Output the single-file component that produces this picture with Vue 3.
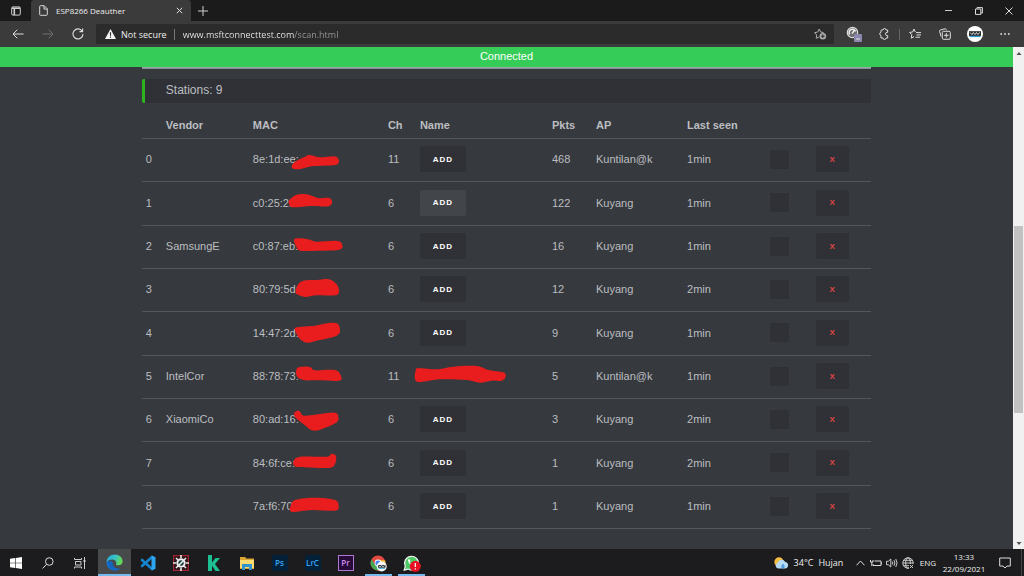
<script setup>
const stations = [
  { vendor: '', mac: '8e:1d:ee:', ch: 11, pkts: 468, ap: 'Kuntilan@k', seen: '1min', mark: [[128, 81], [138, 68], [168, 53], [183, 48], [213, 55], [256, 52], [268, 60], [269, 70], [258, 78], [190, 82], [155, 90], [133, 89]] },
  { vendor: '', mac: 'c0:25:2f', ch: 6, pkts: 122, ap: 'Kuyang', seen: '1min', hover: true, mark: [[121, 54], [143, 38], [173, 37], [208, 48], [241, 48], [249, 61], [238, 73], [188, 72], [133, 76], [121, 69]] },
  { vendor: 'SamsungE', mac: 'c0:87:eb:', ch: 6, pkts: 16, ap: 'Kuyang', seen: '1min', mark: [[135, 42], [148, 37], [178, 40], [203, 47], [266, 45], [280, 58], [271, 71], [213, 74], [155, 74], [142, 62]] },
  { vendor: '', mac: '80:79:5d:', ch: 6, pkts: 12, ap: 'Kuyang', seen: '2min', mark: [[140, 69], [146, 48], [163, 35], [203, 33], [240, 31], [263, 46], [270, 68], [258, 79], [203, 79], [168, 84], [144, 76]] },
  { vendor: '', mac: '14:47:2d:', ch: 6, pkts: 9, ap: 'Kuyang', seen: '1min', mark: [[138, 48], [158, 44], [198, 41], [238, 33], [264, 34], [273, 52], [263, 71], [203, 86], [173, 92], [153, 81], [141, 62]] },
  { vendor: 'IntelCor', mac: '88:78:73:', ch: 11, pkts: 5, ap: 'Kuntilan@k', seen: '1min', mark: [[144, 37], [163, 32], [185, 34], [198, 43], [258, 42], [276, 60], [270, 74], [203, 73], [163, 72], [143, 60]], nameMark: [[0, 40], [17, 37], [62, 40], [112, 32], [182, 30], [217, 42], [262, 49], [269, 62], [257, 74], [227, 74], [192, 80], [152, 72], [72, 70], [3, 77]] },
  { vendor: 'XiaomiCo', mac: '80:ad:16:', ch: 6, pkts: 3, ap: 'Kuyang', seen: '2min', mark: [[137, 40], [151, 36], [165, 50], [213, 45], [258, 41], [268, 54], [260, 72], [198, 95], [163, 75], [138, 54]] },
  { vendor: '', mac: '84:6f:ce:', ch: 6, pkts: 1, ap: 'Kuyang', seen: '2min', mark: [[133, 59], [153, 44], [233, 44], [247, 35], [261, 42], [258, 66], [238, 78], [153, 75], [137, 72]] },
  { vendor: '', mac: '7a:f6:70:', ch: 6, pkts: 1, ap: 'Kuyang', seen: '1min', mark: [[123, 67], [138, 42], [203, 35], [258, 42], [269, 60], [258, 74], [188, 72], [133, 78], [123, 72]] }
]

// Closed smooth curve through all points (Catmull-Rom to Bezier)
function blob(p) {
  const n = p.length
  let d = `M${p[0]}`
  for (let i = 0; i < n; i++) {
    const a = p[(i + n - 1) % n], b = p[i], c = p[(i + 1) % n], e = p[(i + 2) % n]
    d += `C${b[0] + (c[0] - a[0]) / 6},${b[1] + (c[1] - a[1]) / 6} ${c[0] - (e[0] - b[0]) / 6},${c[1] - (e[1] - b[1]) / 6} ${c}`
  }
  return d + 'Z'
}
</script>

<template>
  <div class="desktop">
    <header class="titlebar">
      <button class="tabmenu" aria-label="Tab actions">
        <svg width="10" height="10" viewBox="0 0 10 10" fill="none" stroke="#d0d0d0"><rect x=".7" y=".9" width="8.6" height="8.2" rx="1.2" /><path d="M1 2.2h8M3.3 3v6" stroke-width="1.6" /></svg>
      </button>
      <div class="tab">
        <svg width="9" height="11" viewBox="0 0 9 11" fill="none" stroke="#d8d8d8"><path d="M1.5.7h3.7L8.3 3.8v5.7a.8.8 0 0 1-.8.8h-6a.8.8 0 0 1-.8-.8v-8a.8.8 0 0 1 .8-.8ZM5 .8v3.3h3.3" /></svg>
        <span class="tabtitle">ESP8266 Deauther</span>
        <button aria-label="Close tab"><svg width="7" height="7" viewBox="0 0 7 7" stroke="#ddd"><path d="m.8.8 5.4 5.4M6.2.8.8 6.2" /></svg></button>
      </div>
      <button class="newtab" aria-label="New tab"><svg width="10" height="10" viewBox="0 0 10 10" stroke="#d0d0d0"><path d="M5 0v10M0 5h10" /></svg></button>
      <div class="winctl">
        <button aria-label="Minimize"><svg width="8" height="8" viewBox="0 0 8 8" stroke="#ccc"><path d="M0 3.5h7" /></svg></button>
        <button aria-label="Restore"><svg width="8" height="8" viewBox="0 0 8 8" fill="none" stroke="#ddd"><path d="M.5 2h5.300v5.400H.5ZM2 1.800V.6h5.400V6H6" /></svg></button>
        <button aria-label="Close"><svg width="8" height="8" viewBox="0 0 8 8" stroke="#ddd"><path d="m.5.5 7 7m0-7-7 7" /></svg></button>
      </div>
    </header>

    <nav class="toolbar">
      <button class="nav" aria-label="Back"><svg width="12" height="10" viewBox="0 0 12 10" fill="none" stroke="#ddd"><path d="M11.5 5H1M5.300.7 1 5l4.300 4.300" /></svg></button>
      <button class="nav" aria-label="Forward"><svg width="12" height="10" viewBox="0 0 12 10" fill="none" stroke="#707070"><path d="M.5 5H11M6.700.7 11 5 6.700 9.300" /></svg></button>
      <button class="nav" aria-label="Reload"><svg width="12" height="12" viewBox="0 0 12 12" fill="none" stroke="#ddd" stroke-width="1.1"><path d="M10.200 3.200A5 5 0 1 0 11 6M10.600.6v3H7.500" /></svg></button>
      <div class="address">
        <svg width="11" height="10" viewBox="0 0 11 10"><path d="M5.500 0 11 10H0Z" fill="#f4f4f4" /><path d="M5.500 3.300v3.400M5.500 7.600v1.200" stroke="#2b2b2b" stroke-width="1.1" /></svg>
        <span class="insecure">Not secure</span>
        <input type="text" aria-label="Address" value="www.msftconnecttest.com/scan.html">
        <button aria-label="Add to favorites"><svg width="13" height="12" viewBox="0 0 13 12" fill="none" stroke="#aaa"><path d="M5 9 2.200 10.300l.5-3.300L.6 4.600l3.100-.5L5.200 1l1.500 3.100 3 .4" /><circle cx="8.800" cy="8.200" r="3.300" fill="#aaa" stroke="none" /><path d="M8.800 6.400V10M7 8.200h3.600" stroke="#2b2b2b" /></svg></button>
      </div>
      <div class="extras">
        <button aria-label="Extension"><svg width="16" height="16" viewBox="0 0 16 16"><circle cx="6.500" cy="6.500" r="5.200" fill="#6d6d6d" stroke="#ddd" stroke-width="1.2" /><path d="M3.700 8.500a3.300 3.300 0 1 1 5.800-3M6 7.500l3-4" fill="none" stroke="#eee" stroke-width="1.5" /><rect x="8" y="8" width="8" height="8" rx="1" fill="#8c88ad" /><path d="M10 13h4" stroke="#ddd" /></svg></button>
        <button aria-label="Extensions"><svg width="12" height="12" viewBox="0 0 12 12" fill="none" stroke="#ddd"><path d="M3.500 2H5a1.500 1.500 0 0 1 3 0h1.700v2.300a1.700 1.700 0 1 0 0 3.300V10H8a1.500 1.500 0 0 1-3 0H3V7.500A1.700 1.700 0 0 1 3 4.200V2.500Q3 2 3.500 2Z" /></svg></button>
        <i class="divider"></i>
        <button aria-label="Favorites"><svg width="12" height="12" viewBox="0 0 12 12" fill="none" stroke="#ddd"><path d="M6.300 4 5 1 3.700 4l-3.100.4 2.200 2.300-.5 3.500L5 8.600M7 4.600h5M7.500 6.900H12M6.500 9.200H11" /></svg></button>
        <button aria-label="Collections"><svg width="12" height="12" viewBox="0 0 12 12" fill="none" stroke="#ddd"><rect x="3.300" y="3.300" width="8" height="8" rx="1.2" /><path d="M7.300 5v4.600M5 7.300h4.600M2 8.500.6 3.200A1 1 0 0 1 1.300 2L6 .8a1 1 0 0 1 1.200.7l.2.7" /></svg></button>
        <button class="avatar" aria-label="Profile"><svg width="16" height="16" viewBox="0 0 16 16"><circle cx="8" cy="8" r="8" fill="#fff" /><path d="M2 5.200h12v4.700H2Z" fill="#252a2d" /><path d="m3 6.500 2 2 1.300-2L8 8.500l1.500-2 1.300 2L13 6.400" fill="none" stroke="#fff" stroke-width=".8" /><path d="M2.500 10.500h11" stroke="#2c9bd0" stroke-width="1.2" /></svg></button>
        <button aria-label="Settings"><svg width="10" height="4" viewBox="0 0 10 4" fill="#ddd"><circle cx="1.200" cy="2" r=".9" /><circle cx="5" cy="2" r=".9" /><circle cx="8.800" cy="2" r=".9" /></svg></button>
      </div>
    </nav>

    <div class="viewport">
      <main class="page">
        <div class="status">Connected</div>
        <div class="container">
          <hr>
          <h2>Stations: 9</h2>
          <table>
            <colgroup><col class="c-id"><col class="c-vendor"><col class="c-mac"><col class="c-ch"><col class="c-name"><col class="c-pkts"><col class="c-ap"><col class="c-seen"><col class="c-pick"><col class="c-del"></colgroup>
            <thead>
              <tr><th></th><th>Vendor</th><th>MAC</th><th>Ch</th><th>Name</th><th>Pkts</th><th>AP</th><th>Last seen</th><th></th><th></th></tr>
            </thead>
            <tbody>
              <tr v-for="(s, i) in stations" :key="i">
                <td>{{ i }}</td>
                <td>{{ s.vendor }}</td>
                <td class="marked">{{ s.mac }}<svg class="mark" width="135" height="43" viewBox="0 0 405 129"><path :d="blob(s.mark)" /></svg></td>
                <td>{{ s.ch }}</td>
                <td class="marked">
                  <svg v-if="s.nameMark" class="mark" width="132" height="43" viewBox="0 0 396 129"><path :d="blob(s.nameMark)" /></svg>
                  <button v-else class="add" :class="{ hover: s.hover }">ADD</button>
                </td>
                <td>{{ s.pkts }}</td>
                <td>{{ s.ap }}</td>
                <td>{{ s.seen }}</td>
                <td><input type="checkbox" :aria-label="'Select station ' + i"></td>
                <td><button class="del" :aria-label="'Remove station ' + i">X</button></td>
              </tr>
            </tbody>
          </table>
        </div>
      </main>
      <div class="scrollbar" aria-hidden="true">
        <svg width="12" height="12" viewBox="0 0 12 12"><path d="M3.500 8 6 5l2.500 3Z" fill="#505050" /></svg>
        <i class="above"></i><i class="thumb"></i><i class="below"></i>
        <svg width="12" height="12" viewBox="0 0 12 12"><path d="M3.500 5 6 8l2.500-3Z" fill="#505050" /></svg>
      </div>
    </div>

    <footer class="taskbar">
      <div class="system">
        <button aria-label="Start"><svg width="12" height="12" viewBox="0 0 12 12" fill="#fff"><path d="M0 1.700 5.200 1v4.700H0ZM5.800.9 12 0v5.700H5.800ZM0 6.300h5.200V11L0 10.300ZM5.800 6.300H12V12l-6.200-.9Z" /></svg></button>
        <button aria-label="Search"><svg width="12" height="12" viewBox="0 0 12 12" fill="none" stroke="#ddd"><circle cx="7.300" cy="4.500" r="3.800" /><path d="M4.600 7.300.6 11.500" /></svg></button>
        <button aria-label="Task view"><svg width="12" height="12" viewBox="0 0 12 12" fill="none" stroke="#ccc"><path d="M.5 1v1.500h7V1M1.500 4.500h5.500v3.500H1.500ZM.5 11.500V10h7v1.500M10.500 0v12" /><path d="M9.500 4h2" stroke-width="2" /></svg></button>
      </div>
      <div class="apps">
        <button class="active" aria-label="Microsoft Edge">
          <svg width="17" height="17" viewBox="0 0 17 17"><defs><linearGradient id="eg" x1="0" y1="0" x2="1" y2=".3"><stop offset="0" stop-color="#2aa9e0" /><stop offset=".55" stop-color="#35c1c9" /><stop offset="1" stop-color="#62d957" /></linearGradient></defs><path d="M.5 8.500a8 8 0 0 0 13.900 5.400c-3 1.500-7.300.2-7.500-3.500C6.800 7.500 4.500 5.600.5 8.500Z" fill="#1474cf" /><path d="M.5 8.600C.6 3.700 4.300.4 8.800.4c4.600 0 7.800 3.300 7.800 6.800 0 2.600-1.800 4.100-4.200 4.100-1.400 0-2.800-.5-2.400-1.300C11 8.500 9.600 5.500 6.500 5.500 3.300 5.500.9 7 .5 8.600Z" fill="url(#eg)" /><path d="M2 7.300c2.600-1 5.200.5 4.900 3.100.2 3 3.600 4.800 7.500 3.500A8.400 8.400 0 0 1 9 16.700C4.600 16 2 12 2 7.300Z" fill="#125eb3" opacity=".65" /></svg>
        </button>
        <button aria-label="Visual Studio Code"><svg width="16" height="16" viewBox="0 0 16 16"><path d="M11.500 2.500 2 11M11.500 13.500 2 5" fill="none" stroke="#1684cf" stroke-width="2.600" stroke-linecap="round" /><path d="m11.500.3 4 1.900v11.600l-4 1.900Z" fill="#2ea4ee" /></svg></button>
        <button aria-label="Gear tool"><svg width="16" height="16" viewBox="0 0 16 16"><rect x=".6" y=".6" width="14.800" height="14.800" fill="#2b1519" stroke="#9e2434" stroke-width="1.200" /><path d="M8 0v3M8 13v3M0 8h3M13 8h3M3 3l2 2M13 3l-2 2M3 13l2-2M13 13l-2-2" stroke="#e8e8e8" stroke-width="1.600" /><circle cx="8" cy="8" r="4.700" fill="#f0f0f0" /><circle cx="8" cy="8" r="2.700" fill="#173e3a" /><path d="m5.500 10.500 5-5" stroke="#f4f4f4" stroke-width="1.500" /></svg></button>
        <button aria-label="K"><svg width="13" height="16" viewBox="0 0 13 16"><path d="M1 0h4v7.500L8.500 3H13L8 9l5 7H8.500L5 10.800V16H1Z" fill="#1cbf91" /></svg></button>
        <button aria-label="File Explorer"><svg width="16" height="14" viewBox="0 0 16 14"><path d="M1 1h5l1.500 1.500H15V13H1Z" fill="#d9a634" /><path d="M1 4h14v8H1Z" fill="#ffdc73" /><path d="M3 8h10v6h-3v-3H6v3H3Z" fill="#3393cf" /></svg></button>
        <button aria-label="Photoshop"><span class="adobe">Ps</span></button>
        <button aria-label="Lightroom Classic"><span class="adobe">LrC</span></button>
        <button aria-label="Premiere Pro"><span class="adobe pr">Pr</span></button>
        <button class="open" aria-label="Google Chrome"><svg width="17" height="17" viewBox="0 0 17 17"><circle cx="8" cy="8" r="7.500" fill="#e24b3f" /><path d="M1.500 4.300A7.500 7.500 0 0 0 7.600 15.500L11 10 5 10Z" fill="#42a852" /><path d="M15 5.300a7.500 7.500 0 0 1-7.400 10.200L11 10 9 5.300Z" fill="#f5c33b" /><circle cx="8" cy="8" r="3.400" fill="#fff" /><circle cx="8" cy="8" r="2.600" fill="#4285f4" /><circle cx="11.700" cy="11.500" r="5" fill="#f7f7f7" /><path d="M8 10h7.500v2.800H8Z" fill="#363d40" /><path d="m8.500 10.500 1.500 1.500 1.500-1.500 1.500 1.500 1.500-1.500" stroke="#fff" stroke-width=".6" fill="none" /><path d="M8.500 13.400h6.500" stroke="#4ab0dc" /></svg></button>
        <button class="open" aria-label="WhatsApp"><svg width="18" height="17" viewBox="0 0 18 17"><path d="M1.200 15.200 2.300 11.200A6.900 6.900 0 1 1 5 14.100Z" fill="#4fc965" stroke="#f2f2f2" stroke-width="1.200" /><path d="M5.500 4.300c-1.500 1.700 1.500 5.900 4.500 6.600l1.200-1.500-1.800-1-1 .8C7.600 8.700 7 7.900 6.700 7.200l.7-.9L6.700 4.300Z" fill="#fff" /><circle cx="12.300" cy="11.300" r="5.500" fill="#e81123" /><path d="M12.300 8v4M12.300 13.300v1.300" stroke="#fff" stroke-width="1.200" /></svg></button>
      </div>
      <div class="tray">
        <button class="weather"><svg width="15" height="12" viewBox="0 0 15 12"><circle cx="5" cy="5" r="4.700" fill="#f4bd43" /><path d="M4 11.500a3 3 0 0 1-.2-5.800 4 4 0 0 1 7.400-.7 3.300 3.300 0 0 1 .3 6.500Z" fill="#b8dcf5" /><path d="M9 6.500c1.200 1.700 1.700 2.200 1.700 3.200a1.700 1.700 0 0 1-3.400 0C7.300 8.700 8 8 9 6.500Z" fill="#4f9ddf" /></svg><span>34°C</span><span>Hujan</span></button>
        <button aria-label="Show hidden icons"><svg width="9" height="6" viewBox="0 0 9 6" fill="none" stroke="#ddd"><path d="m.5 5.300 4-4.300 4 4.300" /></svg></button>
        <button aria-label="Battery"><svg width="12" height="8" viewBox="0 0 12 8" fill="none" stroke="#ddd"><path d="M4.500 2H11v4.500H3V5M.5 1v2h2.500V1M1.800 3v4" /><path d="M11.700 3.300v2" /></svg></button>
        <button aria-label="Volume"><svg width="12" height="10" viewBox="0 0 12 10" fill="none" stroke="#ddd" stroke-width=".9"><path d="M.5 3.300h1.800L4.800 1v8L2.300 6.700H.5ZM6.300 3.500q1 1.500 0 3M8 2.200q1.800 2.800 0 5.600M9.800 1q2.500 4 0 8" /></svg></button>
        <button aria-label="Network"><svg width="12" height="12" viewBox="0 0 12 12" fill="none" stroke="#ddd" stroke-width=".9"><circle cx="6" cy="6" r="5.200" /><ellipse cx="6" cy="6" rx="2.300" ry="5.200" /><path d="M.8 6h10.400M1.500 3.300h9M1.500 8.700H7" /><path d="M7 7h5v5H7Z" fill="#1c1c1e" stroke="none" /><path d="m8 8 3 3m0-3-3 3" /></svg></button>
        <button class="lang">ENG</button>
        <button class="clock"><time>13:33</time><span>22/09/2021</span></button>
        <button class="notes" aria-label="Notifications"><svg width="12" height="12" viewBox="0 0 12 12" fill="none" stroke="#ddd"><path d="M.7 1h10.600v8H8L6 11 4 9H.7Z" /></svg></button>
      </div>
    </footer>
  </div>
</template>

<style>
body { background: #36393e; }
</style>

<style scoped>
* { box-sizing: border-box; }
button { border: 0; padding: 0; margin: 0; background: none; color: inherit; font: inherit; display: flex; align-items: center; justify-content: center; flex: none; }
svg { display: block; flex: none; }
.desktop { min-height: 100vh; display: flex; flex-direction: column; background: #36393e; font-family: "Open Sans", "Noto Sans", sans-serif; color: #eee; }

.titlebar { display: flex; height: 21px; background: #1b1b1b; }
.tabmenu { width: 31px; }
.tab { width: 160px; display: flex; align-items: center; gap: 8px; padding: 0 8px; background: #3b3b3b; border-radius: 3px 3px 0 0; font-size: 8px; }
.tabtitle { flex: 1; white-space: nowrap; }
.newtab { width: 24px; }
.winctl { display: flex; margin-left: auto; }
.winctl button { width: 30px; }

.toolbar { display: flex; align-items: center; height: 26px; padding: 0 4px 0 3px; background: #3b3b3b; }
.nav { width: 30px; height: 24px; }
.address { flex: 1; display: flex; align-items: center; height: 20px; margin-left: 3px; padding: 0 7px 0 9px; background: #2b2b2b; border-radius: 2px; font-size: 9px; }
.insecure { padding: 0 7px 0 5px; border-right: 1px solid #777; line-height: 11px; white-space: nowrap; }
.address input { flex: 1; min-width: 0; margin-left: 8px; border: 0; padding: 0; outline: 0; font: inherit; color: transparent; background: linear-gradient(to right, #eee 111px, #999 111px); -webkit-background-clip: text; background-clip: text; }
.extras { display: flex; align-items: center; margin-left: 5px; }
.extras button { width: 30px; height: 24px; }
.divider { width: 1px; height: 11px; background: #666; }

.viewport { flex: 1; display: flex; }
.page { flex: 1; font-family: "Liberation Sans", Arial, sans-serif; color: #bcbec0; font-size: 11px; }
.status { height: 20px; line-height: 19px; background: #35cd57; color: #fff; text-align: center; }
.container { width: 72%; margin: 0 auto; }
hr { height: 2px; margin: 0; border: 0; background: linear-gradient(#a9b3b5, #7b8286); }
h2 { margin: 10px 0 0; height: 24px; line-height: 23px; padding-left: 21px; border-left: 3px solid #2eb41e; border-radius: 2px; background: #2f3136; font-size: 12px; font-weight: normal; }
table { width: 100%; table-layout: fixed; border-spacing: 0; }
.c-id { width: 20px; } .c-vendor { width: 87px; } .c-mac { width: 135px; } .c-ch { width: 32px; } .c-name { width: 132px; }
.c-pkts { width: 44px; } .c-ap { width: 91px; } .c-seen { width: 83px; } .c-pick { width: 46px; } .c-del { width: 59px; }
th, td { padding: 0 0 0 4px; border-bottom: 1px solid #54575b; text-align: left; white-space: nowrap; }
th { height: 36px; padding-top: 8px; }
td { height: 43px; padding-bottom: 2px; }
tr:nth-child(3n+2) td { height: 44px; }
.marked { position: relative; }
.mark { position: absolute; left: 0; top: 0; overflow: visible; fill: #e91d1d; }
.add, .del { height: 26px; border-radius: 2px; background: #2f3136; color: #fff; font-size: 8px; font-weight: bold; letter-spacing: 1px; }
.add { width: 46px; }
.add.hover { background: #42454a; }
.del { width: 33px; color: #e04545; }
input[type="checkbox"] { appearance: none; display: block; width: 19px; height: 19px; margin: 0; background: #2f3136; border-radius: 2px; }

.scrollbar { width: 11px; display: flex; flex-direction: column; align-items: center; background: #f1f1f1; }
.above { flex: 167; }
.thumb { flex: 187; width: 9px; background: #c1c1c1; }
.below { flex: 124; }

.taskbar { display: flex; height: 27px; background: #1c1c1e; font-size: 9px; }
.system, .apps { display: flex; }
.system button { width: 32px; }
.apps { margin-left: 2px; }
.apps button { width: 33px; border-top: 2px solid transparent; border-bottom: 2px solid transparent; }
.apps .active { background: #48494b; border-top-color: #48494b; border-bottom-color: #76b9ed; }
.apps .open { padding: 0 3px; border-bottom: 0; background: linear-gradient(#76b9ed, #76b9ed) center bottom / 27px 2px no-repeat; }
.adobe { width: 16px; height: 16px; border-radius: 2px; background: #04213a; color: #35a5f5; font-size: 8px; font-weight: 600; line-height: 15px; }
.pr { border: 1px solid #b077d3; border-radius: 0; background: #260a38; color: #d08cf2; line-height: 13px; }
.tray { display: flex; margin-left: auto; }
.tray button { width: 16px; }
.tray .weather { width: 79px; gap: 5px; margin-right: 4px; }
.tray .lang { width: 24px; font-size: 8px; }
.tray .clock { width: 48px; flex-direction: column; font-size: 8px; line-height: 12px; }
.tray .notes { width: 34px; border-right: 1px solid #444; margin-right: 2px; }
</style>
